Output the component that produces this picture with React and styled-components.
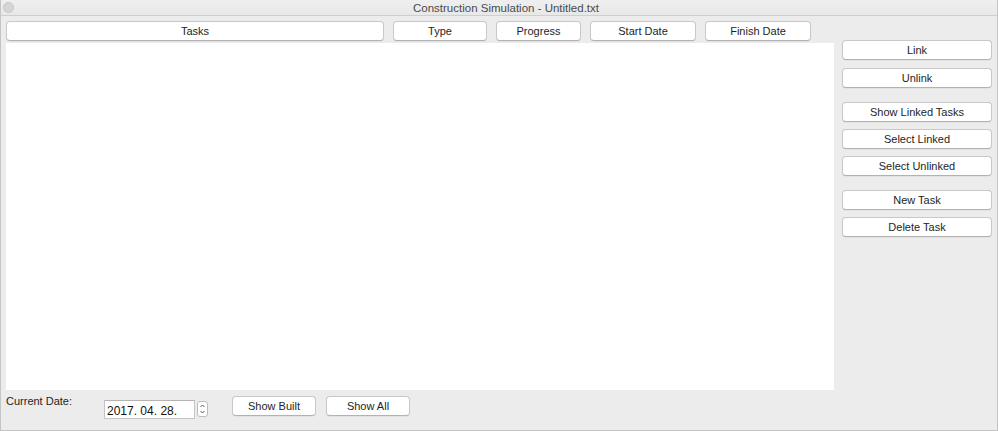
import styled, { createGlobalStyle } from "styled-components";

const GlobalStyle = createGlobalStyle`
	html, body {
		margin: 0;
		padding: 0;
		background: #ececec;
	}
	* {
		box-sizing: border-box;
	}
`;

const headerColumns = [
	{ label: "Tasks", width: 378 },
	{ label: "Type", width: 94 },
	{ label: "Progress", width: 85 },
	{ label: "Start Date", width: 106 },
	{ label: "Finish Date", width: 106 },
];

const sideGroups = [
	["Link", "Unlink"],
	["Show Linked Tasks", "Select Linked", "Select Unlinked"],
	["New Task", "Delete Task"],
];

export default function App() {
	return (
		<>
			<GlobalStyle />
			<Window>
				<TitleBar>
					<CloseDot />
					<Title>Construction Simulation - Untitled.txt</Title>
				</TitleBar>
				<Body>
					<MainColumn>
						<HeaderRow>
							{headerColumns.map((col) => (
								<Button key={col.label} $width={col.width}>
									{col.label}
								</Button>
							))}
						</HeaderRow>
						<TaskList />
						<Footer>
							<Label>Current Date:</Label>
							<DateField>
								<DateInput>2017. 04. 28.</DateInput>
								<Stepper>
									<svg width="11" height="16" viewBox="0 0 11 16">
										<path
											d="M3.5 6 L5.5 4 L7.5 6"
											fill="none"
											stroke="#555"
											strokeWidth="1"
										/>
										<path
											d="M3.5 10 L5.5 12 L7.5 10"
											fill="none"
											stroke="#555"
											strokeWidth="1"
										/>
									</svg>
								</Stepper>
							</DateField>
							<FooterButtons>
								<Button $width={84}>Show Built</Button>
								<Button $width={84}>Show All</Button>
							</FooterButtons>
						</Footer>
					</MainColumn>
					<Sidebar>
						{sideGroups.map((group, i) => (
							<SideGroup key={i} $gap={i === 0 ? 8 : 7}>
								{group.map((label) => (
									<Button key={label} $width={150}>
										{label}
									</Button>
								))}
							</SideGroup>
						))}
					</Sidebar>
				</Body>
			</Window>
		</>
	);
}

const Window = styled.div`
	width: 998px;
	height: 431px;
	background: #ececec;
	border: 1px solid #c4c4c4;
	border-top: none;
	display: flex;
	flex-direction: column;
	font-family: "Liberation Sans", Arial, sans-serif;
	font-size: 11px;
	color: #1e1e1e;
	overflow: hidden;
`;

const TitleBar = styled.div`
	position: relative;
	height: 16px;
	flex-shrink: 0;
	background: linear-gradient(#efefef, #e8e8e8);
	border-bottom: 1px solid #cfcfcf;
	display: flex;
	align-items: center;
	justify-content: center;
`;

const CloseDot = styled.div`
	position: absolute;
	left: 2px;
	top: 2px;
	width: 11px;
	height: 11px;
	border-radius: 50%;
	background: #d6d6d6;
	border: 1px solid #c6c6c6;
`;

const Title = styled.div`
	font-size: 11.5px;
	color: #4a4a4a;
	padding-left: 14px;
`;

const Body = styled.div`
	flex: 1;
	display: flex;
	padding: 5px 0 0 5px;
	gap: 8px;
`;

const MainColumn = styled.div`
	width: 828px;
	display: flex;
	flex-direction: column;
`;

const HeaderRow = styled.div`
	display: flex;
	gap: 9px;
	height: 20px;
`;

const Button = styled.div`
	width: ${(p) => p.$width}px;
	height: 20px;
	flex-shrink: 0;
	background: #fff;
	border: 1px solid #c8c8c8;
	border-bottom-color: #b2b2b2;
	border-radius: 4px;
	box-shadow: 0 0.5px 0.5px rgba(0, 0, 0, 0.08);
	display: flex;
	align-items: center;
	justify-content: center;
	font-size: 11px;
	color: #1e1e1e;
	white-space: nowrap;
`;

const TaskList = styled.div`
	margin-top: 2px;
	height: 347px;
	background: #fff;
`;

const Footer = styled.div`
	display: flex;
	align-items: flex-start;
	padding-top: 7px;
`;

const Label = styled.div`
	width: 98px;
	margin-top: -2px;
	font-size: 11px;
	color: #1e1e1e;
`;

const DateField = styled.div`
	display: flex;
	align-items: flex-start;
	gap: 2px;
	margin-top: 3px;
`;

const DateInput = styled.div`
	width: 91px;
	height: 19px;
	background: #fff;
	border: 1px solid #c4c4c4;
	border-top-color: #b4b4b4;
	padding: 3px 0 0 2px;
	font-size: 12px;
	color: #111;
`;

const Stepper = styled.div`
	width: 11px;
	height: 16px;
	margin-top: 1px;
	background: #fff;
	border: 1px solid #bcbcbc;
	border-radius: 3px;
	display: flex;
	align-items: center;
	justify-content: center;
	svg {
		display: block;
		margin: -1px;
	}
`;

const FooterButtons = styled.div`
	display: flex;
	gap: 10px;
	margin-left: 24px;
	margin-top: -1px;
`;

const Sidebar = styled.div`
	width: 150px;
	padding-top: 19px;
	display: flex;
	flex-direction: column;
	gap: 14px;
`;

const SideGroup = styled.div`
	display: flex;
	flex-direction: column;
	gap: ${(p) => p.$gap}px;
`;
